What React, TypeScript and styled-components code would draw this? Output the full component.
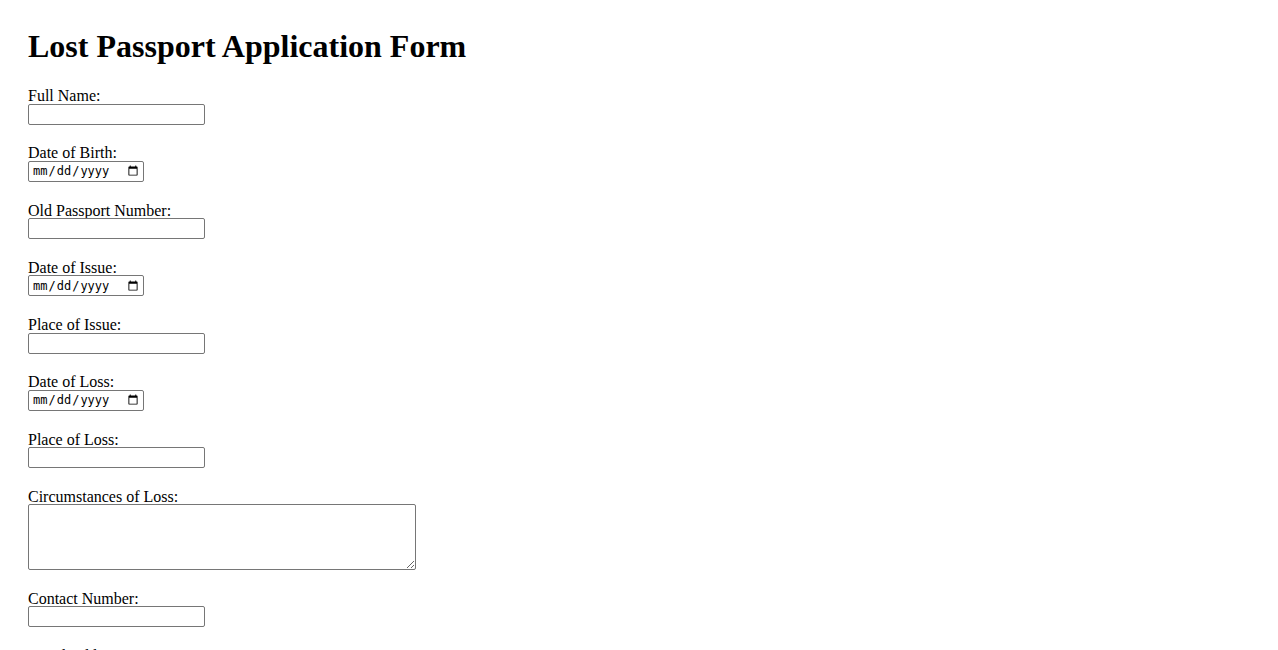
import React from "react";
import styled, { createGlobalStyle } from "styled-components";

const Global = createGlobalStyle`
  html, body { background: #ffffff; }
  body {
    margin: 8px;
    padding: 20px;
    font-family: "Liberation Serif", "Times New Roman", serif;
    font-size: 16px;
    color: #000;
  }
`;

const Title = styled.h1`
  margin: 0 0 21.2px;
  font-size: 32px;
  font-weight: bold;
  line-height: normal;
`;

const Form = styled.form`
  display: flex;
  flex-direction: column;
  align-items: flex-start;
`;

const Field = styled.div`
  display: flex;
  flex-direction: column;
  align-items: flex-start;
  margin-bottom: 18.85px;
`;

const Label = styled.label`
  display: block;
  height: 17.4px;
  line-height: 19.6px;
  font-size: 16px;
`;

const TextInput = styled.input`
  box-sizing: border-box;
  width: 177px;
  height: 21px;
  margin: 0;
  padding: 1px 2px;
  border: 1px solid #767676;
  border-radius: 2px;
  background: #fff;
  font-family: "Liberation Sans", Arial, sans-serif;
  font-size: 13.333px;
`;

const DateInput = styled.input`
  box-sizing: border-box;
  width: 116px;
  height: 21px;
  margin: 0;
  padding: 1px 2px 1px 3px;
  border: 1px solid #767676;
  border-radius: 2px;
  background: #fff;
  font-family: "DejaVu Sans Mono", "Liberation Mono", monospace;
  font-size: 12px;
  color: #000;
`;

const TextArea = styled.textarea`
  box-sizing: border-box;
  width: 388px;
  height: 66px;
  margin: 0;
  padding: 2px;
  border: 1px solid #767676;
  border-radius: 2px;
  background: #fff;
  font-family: "Liberation Mono", monospace;
  font-size: 13.333px;
`;

type Kind = "text" | "date" | "area" | "email" | "tel";

const fields: { label: string; kind: Kind; id: string }[] = [
  { label: "Full Name:", kind: "text", id: "fullName" },
  { label: "Date of Birth:", kind: "date", id: "dob" },
  { label: "Old Passport Number:", kind: "text", id: "oldPassport" },
  { label: "Date of Issue:", kind: "date", id: "issueDate" },
  { label: "Place of Issue:", kind: "text", id: "issuePlace" },
  { label: "Date of Loss:", kind: "date", id: "lossDate" },
  { label: "Place of Loss:", kind: "text", id: "lossPlace" },
  { label: "Circumstances of Loss:", kind: "area", id: "circumstances" },
  { label: "Contact Number:", kind: "tel", id: "contact" },
  { label: "Email Address:", kind: "email", id: "email" },
];

export default function App() {
  return (
    <>
      <Global />
      <Title>Lost Passport Application Form</Title>
      <Form onSubmit={(e) => e.preventDefault()}>
        {fields.map((f) => (
          <Field key={f.id}>
            <Label htmlFor={f.id}>{f.label}</Label>
            {f.kind === "date" ? (
              <DateInput type="date" id={f.id} />
            ) : f.kind === "area" ? (
              <TextArea id={f.id} />
            ) : (
              <TextInput type={f.kind} id={f.id} />
            )}
          </Field>
        ))}
      </Form>
    </>
  );
}
